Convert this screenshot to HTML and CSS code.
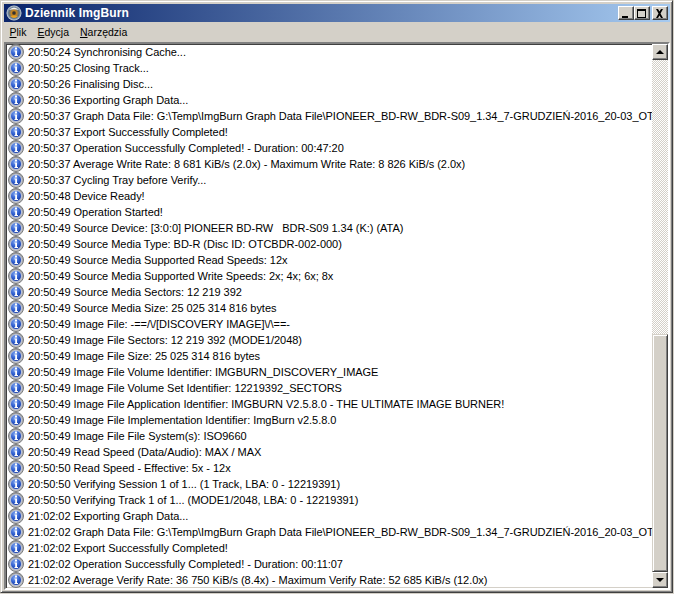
FILE: index.html
```html
<!DOCTYPE html>
<html lang="pl">
<head>
<meta charset="utf-8">
<title>Dziennik ImgBurn</title>
<link rel="stylesheet" href="styles.css">
</head>
<body>
<svg class="defs" width="0" height="0" aria-hidden="true">
  <defs>
    <radialGradient id="blue" cx="0.4" cy="0.3" r="0.8">
      <stop offset="0" stop-color="#7fa5ee"/>
      <stop offset="0.5" stop-color="#2f5fd0"/>
      <stop offset="1" stop-color="#14318f"/>
    </radialGradient>
    <linearGradient id="ring" x1="0" y1="0" x2="0" y2="1">
      <stop offset="0" stop-color="#9a9a9a"/>
      <stop offset="1" stop-color="#c8c8c8"/>
    </linearGradient>
    <symbol id="info" viewBox="0 0 16 16">
      <circle cx="8" cy="8" r="7.5" fill="url(#ring)" stroke="#77797c" stroke-width="1"/>
      <circle cx="8" cy="8" r="5.5" fill="url(#blue)" stroke="#dfe4ee" stroke-width="0.7"/>
      <rect x="7" y="3.500" width="2" height="2" fill="#fff"/>
      <path d="M6.500 6.500H9V11H10V12H6.500V11H7.200V7.500H6.500Z" fill="#fff"/>
    </symbol>
    <radialGradient id="disc" cx="0.5" cy="0.5" r="0.5">
      <stop offset="0" stop-color="#222"/>
      <stop offset="0.35" stop-color="#c9861e"/>
      <stop offset="0.7" stop-color="#58708a"/>
      <stop offset="1" stop-color="#cfd6dc"/>
    </radialGradient>
  </defs>
</svg>
<div class="window">
  <header class="titlebar">
    <svg class="appicon" width="16" height="16" viewBox="0 0 16 16" aria-hidden="true">
      <circle cx="8" cy="8" r="7.500" fill="url(#disc)"/>
      <path d="M3 5Q8 0 13 5Q8 3.500 3 5Z" fill="#f2f2f2"/>
      <path d="M4 11Q8 15 12 11Q8 10 4 11Z" fill="#e8a020"/>
      <circle cx="8" cy="8" r="1.500" fill="#333"/>
    </svg>
    <span class="title">Dziennik ImgBurn</span>
    <div class="caption">
      <button class="capbtn" aria-label="Minimalizuj"><svg width="10" height="9" viewBox="0 0 10 9"><rect x="1" y="7" width="6" height="2" fill="#000"/></svg></button>
      <button class="capbtn capmid" aria-label="Maksymalizuj"><svg width="10" height="9" viewBox="0 0 10 9"><path d="M0 0H9V9H0ZM1 2V8H8V2Z" fill="#000" fill-rule="evenodd"/></svg></button>
      <button class="capbtn" aria-label="Zamknij"><svg width="10" height="9" viewBox="0 0 10 9"><path d="M1 0H3L4.500 2.500L6 0H8L5.500 4.500L8 9H6L4.500 6.500L3 9H1L3.500 4.500Z" fill="#000"/></svg></button>
    </div>
  </header>
  <nav class="menubar">
    <span class="menuitem"><u>P</u>lik</span>
    <span class="menuitem"><u>E</u>dycja</span>
    <span class="menuitem"><u>N</u>arzędzia</span>
  </nav>
  <div class="listbox">
    <ul class="log">
      <li><svg class="i"><use href="#info"/></svg><span>20:50:24 Synchronising Cache...</span></li>
      <li><svg class="i"><use href="#info"/></svg><span>20:50:25 Closing Track...</span></li>
      <li><svg class="i"><use href="#info"/></svg><span>20:50:26 Finalising Disc...</span></li>
      <li><svg class="i"><use href="#info"/></svg><span>20:50:36 Exporting Graph Data...</span></li>
      <li><svg class="i"><use href="#info"/></svg><span>20:50:37 Graph Data File: G:\Temp\ImgBurn Graph Data File\PIONEER_BD-RW_BDR-S09_1.34_7-GRUDZIEŃ-2016_20-03_OTCBDR-002-000_2x.ibg</span></li>
      <li><svg class="i"><use href="#info"/></svg><span>20:50:37 Export Successfully Completed!</span></li>
      <li><svg class="i"><use href="#info"/></svg><span>20:50:37 Operation Successfully Completed! - Duration: 00:47:20</span></li>
      <li><svg class="i"><use href="#info"/></svg><span>20:50:37 Average Write Rate: 8 681 KiB/s (2.0x) - Maximum Write Rate: 8 826 KiB/s (2.0x)</span></li>
      <li><svg class="i"><use href="#info"/></svg><span>20:50:37 Cycling Tray before Verify...</span></li>
      <li><svg class="i"><use href="#info"/></svg><span>20:50:48 Device Ready!</span></li>
      <li><svg class="i"><use href="#info"/></svg><span>20:50:49 Operation Started!</span></li>
      <li><svg class="i"><use href="#info"/></svg><span>20:50:49 Source Device: [3:0:0] PIONEER BD-RW&nbsp;&nbsp; BDR-S09 1.34 (K:) (ATA)</span></li>
      <li><svg class="i"><use href="#info"/></svg><span>20:50:49 Source Media Type: BD-R (Disc ID: OTCBDR-002-000)</span></li>
      <li><svg class="i"><use href="#info"/></svg><span>20:50:49 Source Media Supported Read Speeds: 12x</span></li>
      <li><svg class="i"><use href="#info"/></svg><span>20:50:49 Source Media Supported Write Speeds: 2x; 4x; 6x; 8x</span></li>
      <li><svg class="i"><use href="#info"/></svg><span>20:50:49 Source Media Sectors: 12 219 392</span></li>
      <li><svg class="i"><use href="#info"/></svg><span>20:50:49 Source Media Size: 25 025 314 816 bytes</span></li>
      <li><svg class="i"><use href="#info"/></svg><span>20:50:49 Image File: -==/\/[DISCOVERY IMAGE]\/\==-</span></li>
      <li><svg class="i"><use href="#info"/></svg><span>20:50:49 Image File Sectors: 12 219 392 (MODE1/2048)</span></li>
      <li><svg class="i"><use href="#info"/></svg><span>20:50:49 Image File Size: 25 025 314 816 bytes</span></li>
      <li><svg class="i"><use href="#info"/></svg><span>20:50:49 Image File Volume Identifier: IMGBURN_DISCOVERY_IMAGE</span></li>
      <li><svg class="i"><use href="#info"/></svg><span>20:50:49 Image File Volume Set Identifier: 12219392_SECTORS</span></li>
      <li><svg class="i"><use href="#info"/></svg><span>20:50:49 Image File Application Identifier: IMGBURN V2.5.8.0 - THE ULTIMATE IMAGE BURNER!</span></li>
      <li><svg class="i"><use href="#info"/></svg><span>20:50:49 Image File Implementation Identifier: ImgBurn v2.5.8.0</span></li>
      <li><svg class="i"><use href="#info"/></svg><span>20:50:49 Image File File System(s): ISO9660</span></li>
      <li><svg class="i"><use href="#info"/></svg><span>20:50:49 Read Speed (Data/Audio): MAX / MAX</span></li>
      <li><svg class="i"><use href="#info"/></svg><span>20:50:50 Read Speed - Effective: 5x - 12x</span></li>
      <li><svg class="i"><use href="#info"/></svg><span>20:50:50 Verifying Session 1 of 1... (1 Track, LBA: 0 - 12219391)</span></li>
      <li><svg class="i"><use href="#info"/></svg><span>20:50:50 Verifying Track 1 of 1... (MODE1/2048, LBA: 0 - 12219391)</span></li>
      <li><svg class="i"><use href="#info"/></svg><span>21:02:02 Exporting Graph Data...</span></li>
      <li><svg class="i"><use href="#info"/></svg><span>21:02:02 Graph Data File: G:\Temp\ImgBurn Graph Data File\PIONEER_BD-RW_BDR-S09_1.34_7-GRUDZIEŃ-2016_20-03_OTCBDR-002-000_2x.ibg</span></li>
      <li><svg class="i"><use href="#info"/></svg><span>21:02:02 Export Successfully Completed!</span></li>
      <li><svg class="i"><use href="#info"/></svg><span>21:02:02 Operation Successfully Completed! - Duration: 00:11:07</span></li>
      <li><svg class="i"><use href="#info"/></svg><span>21:02:02 Average Verify Rate: 36 750 KiB/s (8.4x) - Maximum Verify Rate: 52 685 KiB/s (12.0x)</span></li>
    </ul>
    <div class="scrollbar">
      <div class="sbbtn"><span class="arrow up"></span></div>
      <div class="track"><div class="thumb"></div></div>
      <div class="sbbtn"><span class="arrow down"></span></div>
    </div>
  </div>
</div>
</body>
</html>
```
FILE: styles.css
```css
* { box-sizing: border-box; }
html, body { margin: 0; padding: 0; }
body {
  width: 674px;
  height: 594px;
  overflow: hidden;
  font-family: "Liberation Sans", sans-serif;
  font-size: 11px;
  color: #000;
  background: #d4d0c8;
}
.defs { position: absolute; }
.window {
  width: 673px;
  height: 593px;
  display: flex;
  flex-direction: column;
  background: #d4d0c8;
  border-style: solid;
  border-width: 1px;
  border-color: #d4d0c8 #404040 #404040 #d4d0c8;
  box-shadow: inset 1px 1px 0 #fff, inset -1px -1px 0 #808080;
  padding: 3px 2px 2px 3px;
}
.titlebar {
  height: 18px;
  flex: none;
  display: flex;
  align-items: center;
  padding: 0 2px;
  background: linear-gradient(to right, #0a246a, #a6caf0);
  color: #fff;
}
.appicon { flex: none; margin-right: 3px; }
.title { font-weight: 700; font-size: 12px; letter-spacing: 0.12px; }
.caption { margin-left: auto; display: flex; }
.capbtn {
  width: 16px;
  height: 14px;
  padding: 0;
  display: flex;
  align-items: center;
  justify-content: center;
  background: #d4d0c8;
  border-style: solid;
  border-width: 1px;
  border-color: #fff #404040 #404040 #fff;
  box-shadow: inset -1px -1px 0 #808080;
}
.capmid { margin-right: 2px; }
.menubar {
  height: 20px;
  flex: none;
  display: flex;
  align-items: center;
}
.menuitem { padding: 0 5.5px; font-size: 10.5px; }
.listbox {
  flex: 1;
  min-height: 0;
  display: flex;
  background: #fff;
  border-style: solid;
  border-width: 2px;
  border-color: #808080 #fff #fff #808080;
  box-shadow: inset 1px 1px 0 #404040, inset -1px -1px 0 #d4d0c8;
}
.log {
  flex: 1;
  min-width: 0;
  margin: 0;
  padding: 0 0 0 2px;
  list-style: none;
  overflow: hidden;
  letter-spacing: -0.035px;
}
.log li {
  height: 16px;
  display: flex;
  align-items: center;
  white-space: nowrap;
  overflow: hidden;
}
.i { width: 16px; height: 16px; flex: none; margin-right: 4px; }
.scrollbar {
  width: 16px;
  flex: none;
  display: flex;
  flex-direction: column;
}
.sbbtn {
  height: 16px;
  flex: none;
  display: flex;
  align-items: center;
  justify-content: center;
  background: #d4d0c8;
  border-style: solid;
  border-width: 1px;
  border-color: #fff #404040 #404040 #fff;
  box-shadow: inset -1px -1px 0 #808080;
}
.arrow { width: 0; height: 0; border-left: 4px solid transparent; border-right: 4px solid transparent; }
.up { border-bottom: 4px solid #000; }
.down { border-top: 4px solid #000; }
.track {
  flex: 1;
  display: flex;
  flex-direction: column;
  justify-content: flex-end;
  background: repeating-conic-gradient(#d4d0c8 0 25%, #fff 0 50%) 0 0 / 2px 2px;
}
.thumb {
  height: 238px;
  background: #d4d0c8;
  border-style: solid;
  border-width: 1px;
  border-color: #d4d0c8 #404040 #404040 #d4d0c8;
  box-shadow: inset 1px 1px 0 #fff, inset -1px -1px 0 #808080;
}
```
